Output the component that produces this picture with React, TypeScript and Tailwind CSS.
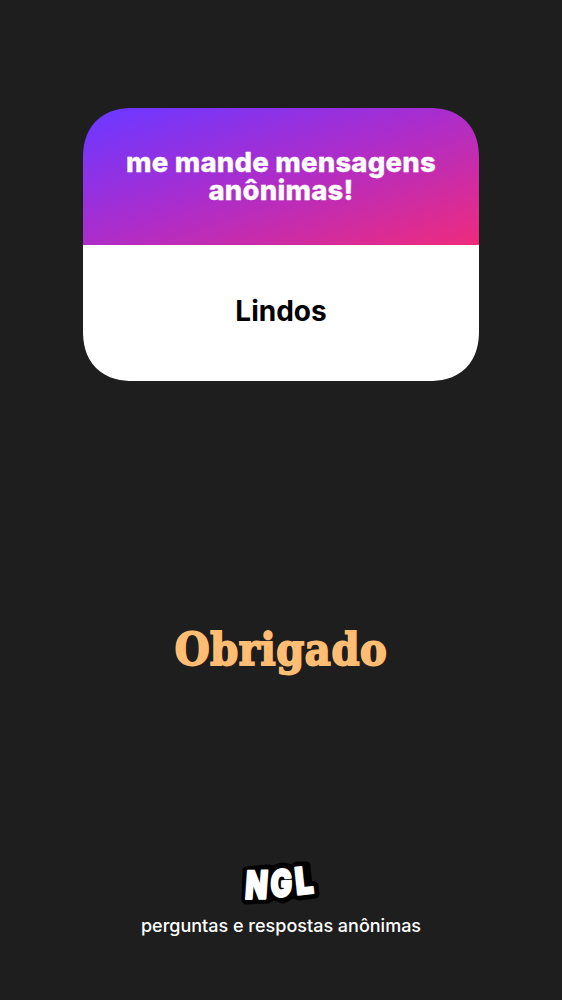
function Logo() {
  return (
    <svg width="84" height="50" viewBox="0 0 84 50" role="img" aria-label="NGL">
      <path
        d="M8 13 29 11 34 12 43 9 53 11 58 8 67 8 69 27 75 28 76 36 60 38 54 36 44 41 34 37 29 41 7 42Z"
        stroke="#000"
        strokeWidth="9"
        strokeLinejoin="round"
      />
      <g
        fill="#fff"
        stroke="#fff"
        strokeWidth="2"
        strokeLinejoin="round"
        className="font-['Inter',sans-serif] text-[35px] font-black"
      >
        <text transform="translate(5.4 41) rotate(-1) skewX(-5) scale(.83 1.1)">N</text>
        <text transform="translate(31.4 39.2) rotate(-4) skewX(-4) scale(.82 1.06)">G</text>
        <text transform="translate(57.6 36.8) rotate(-6) scale(.9 1.06)">L</text>
      </g>
    </svg>
  );
}

export default function App() {
  return (
    <main className="flex h-[1000px] w-[562px] flex-col items-center overflow-hidden bg-[#1e1e1e] pt-[108px] font-['Inter',sans-serif]">
      <section className="h-[273px] w-[396px] shrink-0 overflow-hidden rounded-[50px] text-center [corner-shape:superellipse(1.2)]">
        <div className="flex h-[137px] items-center justify-center bg-[linear-gradient(161deg,#7037ff_5%,#ab2dcc_48%,#ef2b7c_100%)] pb-px">
          <h1 className="text-[27.5px] leading-7 font-extrabold tracking-[0.22px] whitespace-nowrap text-white [-webkit-text-stroke:0.3px_white]">
            me mande mensagens
            <br />
            anônimas!
          </h1>
        </div>
        <div className="flex h-[136px] items-center justify-center bg-white pb-1">
          <p className="text-[28px] leading-8 font-bold text-black">Lindos</p>
        </div>
      </section>

      <p className="mt-[238px] h-[60px] text-[44.5px] leading-[60px] font-bold tracking-[0.6px] text-[#ffbd73] font-stretch-condensed font-['DejaVu_Serif_Condensed','DejaVu_Serif',serif] [-webkit-text-stroke:1.8px_#ffbd73]">
        Obrigado
      </p>

      <footer className="mt-[179px] flex flex-col items-center">
        <Logo />
        <p className="mt-1.5 text-[18px] leading-6 font-medium whitespace-nowrap text-white">
          perguntas e respostas anônimas
        </p>
      </footer>
    </main>
  );
}
